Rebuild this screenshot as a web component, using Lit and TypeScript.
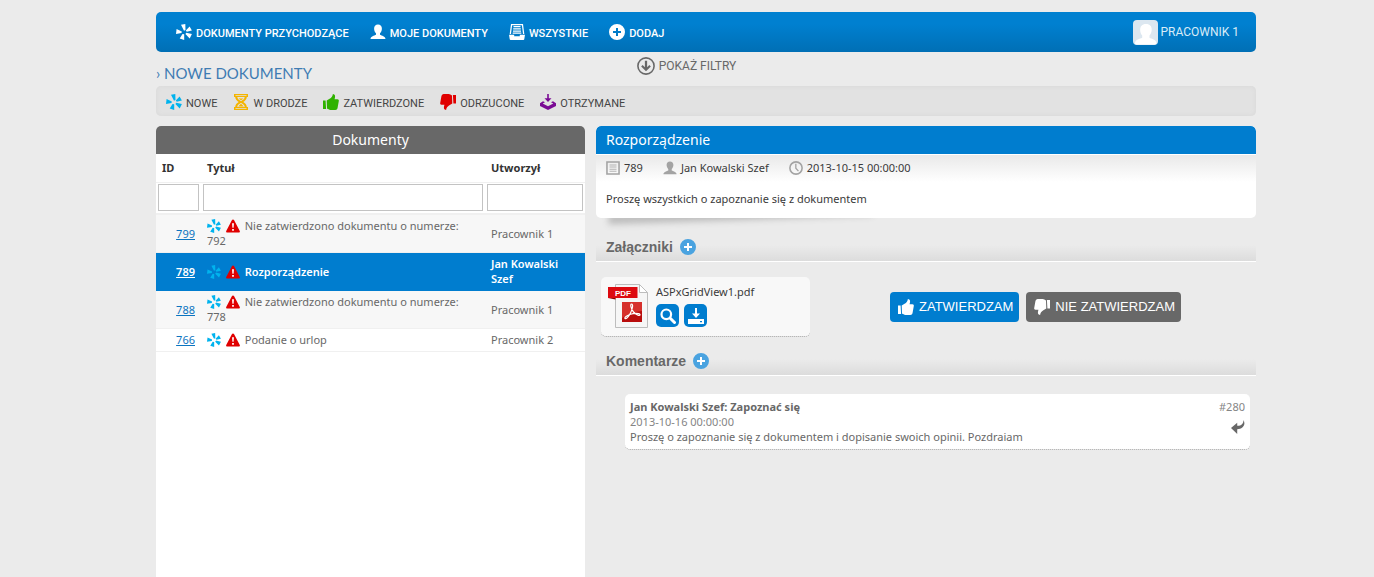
import { LitElement, html, svg, css } from "lit";
import { customElement, property, state } from "lit/decorators.js";
import { classMap } from "lit/directives/class-map.js";

const ICONS: Record<string, unknown> = {
  petals: svg`<path d="M5 .8 9.300 0l.2 6-1.500.7zM.6 5l5.200 2.500-.3 1.600L0 9.900zM6.500 9.900l1.700.3V16l-4.500-1.500zM13.600 2.500l2.300 4-5.100 1.200-1-1.200zM10.300 8.700l5.600 1.400-2.200 4.300-4.300-4.400z"/>`,
  person: svg`<path d="M8 .5c2.500 0 4 1.700 3.900 4.200-.1 2-.9 3.500-1.900 4.500v1.600c1.800 1 5.300 1.400 5.500 4.200H.5c.2-2.800 3.700-3.200 5.500-4.200V9.200C5 8.200 4.200 6.700 4.100 4.700 4 2.200 5.500.5 8 .5z"/>`,
  tray: svg`<path fill-rule="evenodd" d="M2 0h12l1.300 10h-1.300L12.900 1.200H3.100L2 10H.7zM4.500 2h7v1.200h-7zM4.200 4.300h7.600v1.200H4.200zM4 6.500h8v1.200H4zM3.700 8.600h8.600v1.100H3.700zM0 10.800h5.200v1.400h5.600v-1.400H16L15.300 15q0 1-1 1H1.700q-1 0-1-1z"/>`,
  plus: svg`<path fill-rule="evenodd" d="M8 0a8 8 0 1 1 0 16A8 8 0 0 1 8 0zM7 4v3H4v2h3v3h2V9h3V7H9V4z"/>`,
  hourglass: svg`<path fill-rule="evenodd" d="M1 0h14v3h-1.200c0 2.300-1.600 3.700-3.500 5 1.900 1.300 3.500 2.700 3.500 5H15v3H1v-3h1.200c0-2.300 1.600-3.700 3.500-5C3.800 6.700 2.200 5.300 2.200 3H1zm3.300 3c.1 2 1.900 3 3.700 4.200C9.800 6 11.600 5 11.700 3zM8 8.800C6.200 10 4.400 11 4.300 13h7.400C11.600 11 9.800 10 8 8.800zM2.500 1v.8h11V1zM2.500 14.200v.8h11v-.8zM5.500 4.500h5L8 6.300zM8 9.800l2.800 2.700H5.200z"/>`,
  thumb: svg`<path d="M0 6.500h2.600l.5 8.500H0zM3.700 6.500l2.900-1.700c2-1.100 3-2.700 3.300-4.800 2.300.2 2.700 2 1.700 5.300h2.900c1 0 1.500.8 1.300 1.700l-1.200 6.700C14.400 15 13.500 16 12.200 16H7.400C6 16 5.200 15 4 14.600z"/>`,
  download: svg`<path d="M7.200 0h1.600v4.200h2.700L8 8 4.500 4.200h2.700zM3 7.300 5 8.200l-2.300 1.300L8 12.200l5.300-2.700L11 8.200l2-.9 3 2V12l-8 4-8-4V9.300z"/>`,
  circleDown: svg`<circle cx="8" cy="8" r="7.200" fill="none" stroke="currentColor" stroke-width="1.400"/><path d="M7 3.300h2v5.900l2-2 1.300 1.300L8 12.700 3.700 8.500 5 7.200l2 2z"/>`,
  warning: svg`<path d="M8 .5c.6 0 1 .3 1.300.8l6.300 12c.7 1.200.1 2.200-1 2.200H1.400c-1.100 0-1.700-1-1-2.200l6.300-12c.3-.5.7-.8 1.300-.8z"/><path fill="#fff" d="M6.900 4.800h2.200l-.4 5.200H7.300zM7 11.300h2v2H7z"/>`,
  doc: svg`<path fill="none" stroke="currentColor" stroke-width="1.800" d="M1.100 1.100h13.800v13.800H1.100z"/><path d="M4 4h8v1.100H4zM4 6.400h8v1.100H4zM4 8.800h8v1.100H4zM4 11.200h8v1.100H4z" opacity=".8"/>`,
  clock: svg`<circle cx="8" cy="8" r="7" fill="none" stroke="currentColor" stroke-width="1.800"/><path fill="none" stroke="currentColor" stroke-width="1.500" d="M7.800 3v5.200l3 3.400"/>`,
  search: svg`<circle cx="6.300" cy="6.300" r="4.800" fill="none" stroke="currentColor" stroke-width="2.200"/><path fill="none" stroke="currentColor" stroke-width="3" stroke-linecap="round" d="m10.500 10.500 4 4"/>`,
  save: svg`<path fill-rule="evenodd" d="M7 0h2v5.500h3L8 10 4 5.500h3zM0 11h16v5H0zm12 2v1.300h2V13z"/>`,
  reply: svg`<path d="M14.300 0c3 6-1.100 10.300-7.200 10.700V16L0 9.200 7.100 3v3.600C11.500 6.800 14.300 4.600 14.300 0z"/>`,
};

@customElement("ui-icon")
class UiIcon extends LitElement {
  @property() name = "";
  static styles = css`
    :host { display: inline-block; width: 16px; height: 16px; flex: none; }
    .glyph { display: block; width: 100%; height: 100%; fill: currentColor; }
  `;
  render() {
    return html`<svg class="glyph" viewBox="0 0 16 16" aria-hidden="true">${ICONS[this.name]}</svg>`;
  }
}

interface Doc { id: number; title: string; author: string; }

@customElement("app-root")
class AppRoot extends LitElement {
  @state() selected = 789;

  docs: Doc[] = [
    { id: 799, title: "Nie zatwierdzono dokumentu o numerze: 792", author: "Pracownik 1" },
    { id: 789, title: "Rozporządzenie", author: "Jan Kowalski Szef" },
    { id: 788, title: "Nie zatwierdzono dokumentu o numerze: 778", author: "Pracownik 1" },
    { id: 766, title: "Podanie o urlop", author: "Pracownik 2" },
  ];
  menu = [
    ["petals", "Dokumenty przychodzące"],
    ["person", "Moje dokumenty"],
    ["tray", "Wszystkie"],
    ["plus", "Dodaj"],
  ];
  legend = [
    ["petals", "Nowe", "new"],
    ["hourglass", "W drodze", "pending"],
    ["thumb", "Zatwierdzone", "approved"],
    ["thumb", "Odrzucone", "rejected"],
    ["download", "Otrzymane", "received"],
  ];

  static styles = css`
    * { box-sizing: border-box; }
    :host {
      display: flex; flex-direction: column; min-height: 100vh;
      padding: 12px 118px 0 156px; background: #ebebeb; color: #686868;
      font: 11px/15px "Noto Sans", "Open Sans", sans-serif;
    }
    h1, h2, h3, p { margin: 0; font-weight: 400; }
    a { color: inherit; text-decoration: none; }
    button { border: 0; padding: 0; background: none; color: inherit; font: inherit; cursor: pointer; }

    .topbar {
      display: flex; align-items: center; height: 40px; padding: 0 17px 0 20px;
      border-radius: 5px; background: linear-gradient(#0080d0, #0080d0 30%, #006fb5);
      color: #fff; font-family: Roboto, sans-serif; text-transform: uppercase;
    }
    .menu { display: flex; gap: 21px; flex: 1; }
    .item { display: flex; align-items: center; gap: 4px; padding-top: 3px; font-weight: 500; }
    .item ui-icon { margin-bottom: 4px; }
    .user { display: flex; align-items: center; gap: 2px; color: #d9ecf8; font-size: 12px; }
    .avatar { width: 25px; height: 25px; }

    .subhead { display: grid; grid-template-columns: 1fr auto 1fr; height: 34px; padding-right: 39px; text-transform: uppercase; }
    .page-title { padding-top: 11px; color: #3f7cb3; font: 15px/20px Lato, sans-serif; }
    .filters { display: flex; align-items: center; gap: 4px; height: 28px; font-family: Roboto, sans-serif; font-size: 12px; text-transform: uppercase; }
    .filters ui-icon { width: 18px; height: 18px; }

    .legend {
      display: flex; align-items: center; gap: 16px; height: 30px; padding: 5px 10px 0;
      border-radius: 5px; background: #e2e2e2; box-shadow: inset 0 0 4px #d8d8d8;
      color: #444; font-family: Roboto, sans-serif; text-transform: uppercase;
    }
    .tag { display: flex; align-items: center; gap: 4px; line-height: 16px; }
    .tag ui-icon { margin-bottom: 4px; }
    .new { color: #00b3ee; }
    .pending { color: #f4b400; }
    .approved { color: #2fb200; }
    .rejected, .alert { color: #e00000; }
    .rejected, .flip { transform: rotate(180deg); }
    .received { color: #7a0a94; }

    .columns { display: grid; grid-template-columns: 429fr 660fr; gap: 11px; flex: 1; padding-top: 10px; }
    .list { display: flex; flex-direction: column; background: #fff; border-radius: 5px 5px 0 0; }
    .bar { height: 28px; border-radius: 5px 5px 0 0; background: #686868; color: #fff; font-size: 14px; line-height: 28px; }
    .list .bar { text-align: center; }
    .grid { width: 100%; border-collapse: collapse; table-layout: fixed; }
    .grid .c-id { width: 45px; }
    .grid .c-author { width: 100px; }
    .grid th { height: 28px; padding: 0 6px; color: #333; font-weight: 700; text-align: left; border-bottom: 1px solid #f0f0f0; }
    .grid .filter td { height: 32px; padding: 0 2px; border-bottom: 2px solid #f0f0f0; }
    .grid input { display: block; width: 100%; height: 27px; border: 1px solid #c3c3c3; background: #fff; font: inherit; padding: 0 4px; outline: 0; }
    .grid td { padding: 3px 6px; height: 23px; border-bottom: 1px solid #f0f0f0; }
    .grid .title { padding-right: 16px; }
    .grid .tall td { height: 38px; }
    .grid .odd { background: #f7f7f7; }
    .grid .id { text-align: right; }
    .grid .id a { color: #0b74c0; text-decoration: underline; }
    .grid .on td { border-color: #007dcf; background: #007dcf; color: #fff; font-weight: 600; }
    .grid .on .id a { color: #fff; }
    .grid td ui-icon { width: 14px; height: 14px; vertical-align: -3px; margin-right: 2px; }

    .detail { min-width: 0; }
    .sheet { position: relative; }
    .sheet::before {
      content: ""; position: absolute; left: 12px; bottom: 8px; width: 40%; height: 10px;
      box-shadow: 0 10px 6px #bdbdbd; transform: rotate(-2deg);
    }
    .sheet-inner { position: relative; border-radius: 5px; background: #fff; overflow: hidden; color: #3a3a3a; }
    .sheet .bar { padding-left: 10px; background: #007dcf; }
    .meta { display: flex; gap: 20px; align-items: center; height: 28px; padding: 0 10px 2px; background: linear-gradient(#e9e9e9, #fff); border-top: 1px solid #fff; }
    .meta span { display: flex; align-items: center; gap: 4px; }
    .meta ui-icon { width: 14px; height: 14px; color: #a3a3a3; }
    .message { padding: 9px 10px 12px; }

    .section { display: flex; align-items: center; gap: 7px; height: 30px; padding-left: 10px; border-bottom: 1px solid #fff; background: linear-gradient(#ebebeb 45%, #dcdcdc); }
    .section h2 { font: 700 14px/20px "Liberation Sans", Arial, sans-serif; }
    .add { display: flex; color: #4aa3e0; }
    .white { background: radial-gradient(#fff 45%, transparent 46%); }
    .first { margin-top: 14px; }
    .attachments { display: flex; align-items: center; gap: 80px; padding: 15px 5px 9px; }
    .file { display: flex; gap: 8px; width: 209px; height: 60px; padding: 7px; border-radius: 5px; border-bottom: 1px dotted #999; background: #f8f8f8; color: #3a3a3a; }
    .pdf { width: 40px; height: 44px; flex: none; }
    .tools { display: flex; gap: 5px; padding-top: 5px; }
    .tool { display: flex; align-items: center; justify-content: center; width: 23px; height: 23px; border-radius: 5px; background: #007dcf; color: #fff; }
    .actions { display: flex; gap: 7px; }
    .action { display: flex; align-items: center; gap: 5px; height: 30px; padding: 0 6px 0 8px; border-radius: 4px; background: #007dcf; color: #fff; font: 13px/20px "Liberation Sans", Arial, sans-serif; text-transform: uppercase; white-space: nowrap; }
    .action.no { background: #686868; }
    .comment { display: flex; justify-content: space-between; margin: 18px 6px 0 29px; padding: 5px; border-radius: 5px; border-bottom: 1px dotted #999; background: #fff; }
    .comment strong { font-weight: 700; }
    .muted { color: #858585; }
    .side { display: flex; flex-direction: column; align-items: flex-end; gap: 6px; }
    .side ui-icon { width: 14px; height: 14px; }
    .reply { display: flex; }
  `;

  row(d: Doc, i: number) {
    const on = d.id === this.selected;
    return html`<tr class=${classMap({ on, odd: i % 2 === 0, tall: i < 3 })} @click=${() => (this.selected = d.id)}>
      <td class="id"><a href="#${d.id}">${d.id}</a></td>
      <td class="title"><ui-icon class="new" name="petals"></ui-icon> <ui-icon class="alert" name="warning"></ui-icon> ${d.title}</td>
      <td>${d.author}</td>
    </tr>`;
  }

  render() {
    return html`
      <header class="topbar">
        <nav class="menu">
          ${this.menu.map(([icon, label]) => html`<a class="item" href="#"><ui-icon name=${icon}></ui-icon>${label}</a>`)}
        </nav>
        <a class="user" href="#">
          <svg class="avatar" viewBox="0 0 25 25" aria-hidden="true">
            <rect width="25" height="25" rx="4" fill="#dce7f0" />
            <path fill="#fff" d="M13 4c4 0 6 2.500 5.700 6.200-.2 2.300-1.100 4-2.200 5.300v2.300c2.200 1.300 6.300 1.600 7 5.200-.5 1-1.300 1.500-2.500 1.500H4C2.800 24.500 2 24 2 23c.5-3.600 4.800-3.900 7.200-5.200v-2.300C8 14.200 7.300 12.500 7.200 10.200 7 6.500 9 4 13 4z" />
          </svg>
          Pracownik 1
        </a>
      </header>

      <div class="subhead">
        <h1 class="page-title">› Nowe dokumenty</h1>
        <button class="filters"><ui-icon name="circleDown"></ui-icon>Pokaż filtry</button>
      </div>

      <nav class="legend">
        ${this.legend.map(([icon, label, tone]) => html`<a class="tag" href="#"><ui-icon class=${tone} name=${icon}></ui-icon>${label}</a>`)}
      </nav>

      <main class="columns">
        <section class="list">
          <h2 class="bar">Dokumenty</h2>
          <table class="grid">
            <colgroup><col class="c-id" /><col /><col class="c-author" /></colgroup>
            <thead>
              <tr><th>ID</th><th>Tytuł</th><th>Utworzył</th></tr>
              <tr class="filter">
                <td><input aria-label="ID" /></td>
                <td><input aria-label="Tytuł" /></td>
                <td><input aria-label="Utworzył" /></td>
              </tr>
            </thead>
            <tbody>${this.docs.map((d, i) => this.row(d, i))}</tbody>
          </table>
        </section>

        <section class="detail">
          <article class="sheet">
            <div class="sheet-inner">
              <h2 class="bar">Rozporządzenie</h2>
              <div class="meta">
                <span><ui-icon name="doc"></ui-icon>789</span>
                <span><ui-icon name="person"></ui-icon>Jan Kowalski Szef</span>
                <span><ui-icon name="clock"></ui-icon>2013-10-15 00:00:00</span>
              </div>
              <p class="message">Proszę wszystkich o zapoznanie się z dokumentem</p>
            </div>
          </article>

          <header class="section first">
            <h2>Załączniki</h2>
            <button class="add" aria-label="Dodaj załącznik"><ui-icon class="white" name="plus"></ui-icon></button>
          </header>
          <div class="attachments">
            <div class="file">
              <svg class="pdf" viewBox="0 0 40 44" aria-hidden="true">
                <path d="M7.500.5h24l8 8v35h-32z" fill="#f6f6f6" stroke="#bdbdbd" />
                <path d="M31.500.5v8h8z" fill="#fff" stroke="#bdbdbd" />
                <path d="M0 3h29.500v11H0z" fill="#dd0a10" /><path d="M0 14h7.500v1.500z" fill="#8d0000" />
                <text x="7" y="12" fill="#fff" font-family="Liberation Sans" font-weight="700" font-size="8">PDF</text>
                <path d="M14 18h20v20H14z" fill="#b90d0d" /><path d="M14 18h20v9q-11 1-20 7z" fill="#d6302c" />
                <path d="M23.500 20c2 0 1 5-1 9s-4.500 6.500-5.500 5.500 3-4 8-4.800 7.500.2 7 1.300-4-.3-6.500-3-3.500-8-2-8z" fill="none" stroke="#fff" stroke-width="1.200" />
              </svg>
              <div>
                <p>ASPxGridView1.pdf</p>
                <div class="tools">
                  <button class="tool" aria-label="Podgląd"><ui-icon name="search"></ui-icon></button>
                  <button class="tool" aria-label="Pobierz"><ui-icon name="save"></ui-icon></button>
                </div>
              </div>
            </div>
            <div class="actions">
              <button class="action"><ui-icon name="thumb"></ui-icon>Zatwierdzam</button>
              <button class="action no"><ui-icon class="flip" name="thumb"></ui-icon>Nie zatwierdzam</button>
            </div>
          </div>

          <header class="section">
            <h2>Komentarze</h2>
            <button class="add" aria-label="Dodaj komentarz"><ui-icon class="white" name="plus"></ui-icon></button>
          </header>
          <article class="comment">
            <div>
              <p><strong>Jan Kowalski Szef: Zapoznać się</strong></p>
              <p class="muted">2013-10-16 00:00:00</p>
              <p>Proszę o zapoznanie się z dokumentem i dopisanie swoich opinii. Pozdraiam</p>
            </div>
            <div class="side">
              <span class="muted">#280</span>
              <button class="reply" aria-label="Odpowiedz"><ui-icon name="reply"></ui-icon></button>
            </div>
          </article>
        </section>
      </main>
    `;
  }
}
